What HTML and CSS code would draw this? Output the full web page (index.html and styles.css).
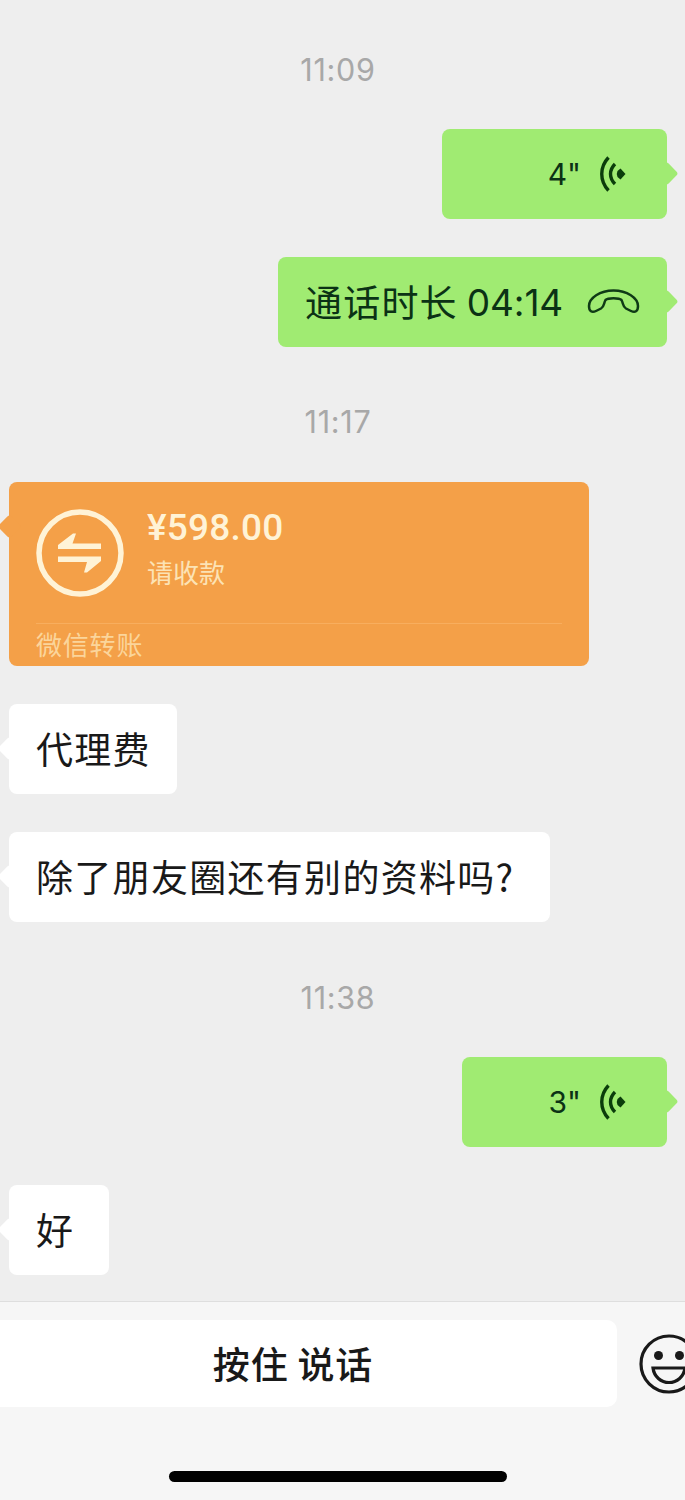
FILE: index.html
```html
<!DOCTYPE html>
<html lang="zh-CN">
<head>
<meta charset="utf-8">
<title>聊天</title>
<link rel="stylesheet" href="styles.css">
</head>
<body>
<main class="chat">
  <time class="stamp">11:09</time>
  <div class="bubble sent voice voice-4">
    <span class="secs">4"</span>
    <svg class="waves" viewBox="0 0 26 36" fill="none" stroke="#0b3d0b" stroke-width="3.4"><path d="M8.500 1.500C-.5 11 -.5 25 8.500 34.500M15 8C9 14 9 22 15 28"/><path d="M17.500 15L20.500 12.500L25.500 18L20.500 23.500L17.500 21Q16 18 17.500 15Z" fill="#0b3d0b" stroke="none"/></svg>
  </div>
  <div class="bubble sent call">
    <span class="label">通话时长</span><span class="duration">04:14</span>
    <svg class="phone" viewBox="0 0 54 28" fill="none" stroke="#0f3a16" stroke-width="2.500" stroke-linejoin="round"><path d="M3 18C3 10 14 2.500 27.500 2.500S52 10 52 18C52 23.500 49 25 45 23L40 20.500C36.500 18.500 37.500 15.500 35.500 12C33 9.500 22 9.500 19.500 12C17.500 15.500 18.500 18.500 15 20.500L10 23C6 25 3 23.500 3 18Z"/></svg>
  </div>
  <time class="stamp">11:17</time>
  <section class="bubble received transfer">
    <div class="transfer-main">
      <svg class="transfer-icon" viewBox="0 0 88 88"><circle cx="44" cy="44" r="41" fill="none" stroke="#fff3d6" stroke-width="5.500"/><path d="M22 40V36L37 24.500H40L36.500 34.500H65V40ZM22 47.500H65V52L51 63.500H48L51 53H22Z" fill="#fff3d6"/></svg>
      <div class="transfer-info">
        <div class="amount">¥598.00</div>
        <div class="note">请收款</div>
      </div>
    </div>
    <div class="transfer-source">微信转账</div>
  </section>
  <div class="bubble received text fee">代理费</div>
  <div class="bubble received text question">除了朋友圈还有别的资料吗?</div>
  <time class="stamp last">11:38</time>
  <div class="bubble sent voice voice-3">
    <span class="secs">3"</span>
    <svg class="waves" viewBox="0 0 26 36" fill="none" stroke="#0b3d0b" stroke-width="3.4"><path d="M8.500 1.500C-.5 11 -.5 25 8.500 34.500M15 8C9 14 9 22 15 28"/><path d="M17.500 15L20.500 12.500L25.500 18L20.500 23.500L17.500 21Q16 18 17.500 15Z" fill="#0b3d0b" stroke="none"/></svg>
  </div>
  <div class="bubble received text ok">好</div>
</main>
<footer class="composer">
  <div class="controls">
    <button class="talk">按住 说话</button>
    <svg class="smiley" viewBox="0 0 60 60" fill="none" stroke="#191919" stroke-width="3.200"><circle cx="30" cy="30" r="28"/><circle cx="19.500" cy="21.500" r="4.500" fill="#191919" stroke="none"/><circle cx="40.500" cy="21.500" r="4.500" fill="#191919" stroke="none"/><path d="M14 34H46C45 42.500 38 48.500 30 48.500S15 42.500 14 34Z"/></svg>
  </div>
  <div class="home-bar"></div>
</footer>
</body>
</html>
```
FILE: styles.css
```css
* { box-sizing: border-box; }
body {
  margin: 0;
  width: 685px;
  height: 1500px;
  overflow: hidden;
  display: flex;
  flex-direction: column;
  background: #eeeeee;
  color: #191919;
  font-family: "Noto Sans CJK SC", sans-serif;
}
svg { display: block; flex: none; overflow: visible; }
.chat {
  height: 1301px;
  flex: none;
  display: flex;
  flex-direction: column;
  align-items: flex-start;
  padding: 0 18px 0 9px;
}
.stamp {
  width: 658px;
  margin: 55px 0 39px;
  height: 40px;
  line-height: 40px;
  text-align: center;
  font-family: Inter, sans-serif;
  font-size: 30.5px;
  letter-spacing: 0.7px;
  color: #a8a8a8;
}
.stamp:first-child { margin-top: 50px; }
.stamp.last { margin-top: 56px; }
.bubble {
  position: relative;
  flex: none;
  height: 90px;
  border-radius: 8px;
  display: flex;
  align-items: center;
}
.bubble + .bubble { margin-top: 38px; }
.bubble::before {
  content: "";
  position: absolute;
  top: 36px;
  width: 17px;
  height: 17px;
  border-radius: 3px;
  transform: rotate(45deg);
  background: inherit;
}
.sent { align-self: flex-end; background: #a0eb72; color: #0b3215; margin-right: 0; }
.sent::before { right: -8px; }
.received { background: #fff; }
.received::before { left: -8px; }
.voice { justify-content: flex-end; padding-right: 41px; gap: 19px; }
.voice-4 { width: 225px; }
.voice-3 { width: 205px; }
.secs { font-family: Inter, sans-serif; font-size: 30px; line-height: 40px; }
.waves { width: 26px; height: 36px; }
.call { width: 389px; padding-left: 27px; }
.label { font-size: 37px; letter-spacing: 1.2px; line-height: 54px; padding-bottom: 2px; }
.duration {
  margin-left: 9px;
  width: 96px;
  font-family: Inter, sans-serif;
  font-size: 37px;
  letter-spacing: -0.1px;
  white-space: nowrap;
}
.phone { width: 54px; height: 28px; margin-left: 23px; }
.text { padding: 0 0 2px 27px; font-size: 37px; letter-spacing: 1.3px; line-height: 54px; white-space: nowrap; }
.fee { width: 168px; }
.question { width: 541px; }
.ok { width: 100px; }
.transfer {
  width: 580px;
  height: 184px;
  margin-top: 1px;
  flex-direction: column;
  align-items: stretch;
  padding: 0 27px;
  background: #f4a048;
  color: #fff3d6;
}
.transfer-main { height: 142px; padding-top: 27px; display: flex; gap: 23px; border-bottom: 1px solid #f8ae5e; }
.transfer-icon { width: 88px; height: 88px; }
.amount { font-family: Roboto, sans-serif; font-weight: 500; font-size: 37px; line-height: 37px; letter-spacing: 0.2px; }
.note { font-size: 26px; line-height: 38px; margin-top: 7px; color: #fce3b5; }
.transfer-source { font-size: 26px; line-height: 40px; letter-spacing: 0.8px; color: #fbd59b; }
.composer { height: 199px; flex: none; background: #f6f6f6; border-top: 1px solid #dedede; }
.controls { display: flex; align-items: center; padding-top: 18px; gap: 22px; }
.talk {
  width: 617px;
  height: 87px;
  flex: none;
  border: 0;
  border-radius: 0 10px 10px 0;
  background: #fff;
  padding: 0 31px 1px 0;
  font: 500 37px/54px "Noto Sans CJK SC", sans-serif;
  letter-spacing: 0.8px;
  color: #191919;
  text-align: center;
}
.smiley { width: 60px; height: 60px; }
.home-bar { width: 338px; height: 11px; margin: 64px 0 0 169px; border-radius: 6px; background: #000; }
```
